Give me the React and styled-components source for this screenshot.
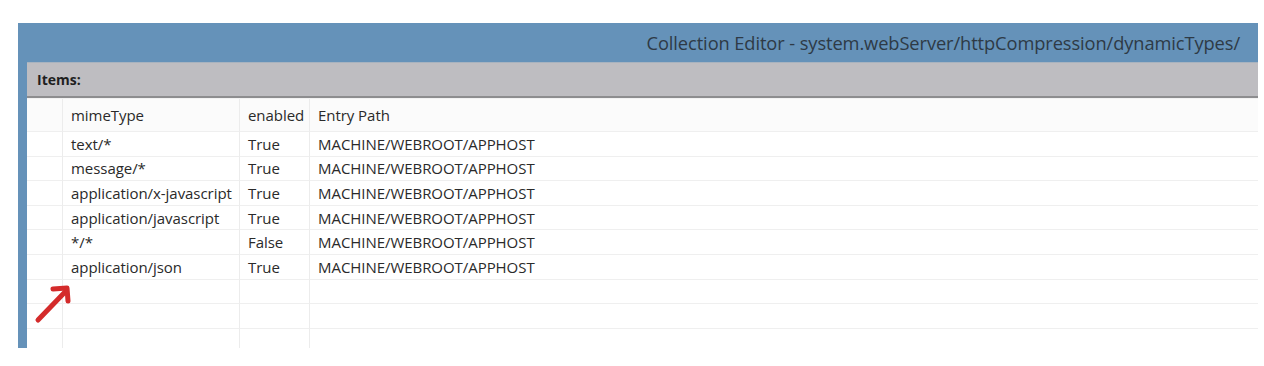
import React from 'react'
import styled, { createGlobalStyle } from 'styled-components'

const GlobalStyle = createGlobalStyle`
  html, body {
    margin: 0;
    padding: 0;
    background: #ffffff;
  }
`

const Page = styled.div`
  width: 1264px;
  height: 366px;
  padding: 23px 0 0 18px;
  box-sizing: border-box;
  font-family: 'Open Sans', 'Liberation Sans', sans-serif;
`

const Window = styled.div`
  position: relative;
  width: 1240px;
  height: 325px;
  background: #6592b9;
  display: flex;
  flex-direction: column;
  overflow: hidden;
`

const TitleBar = styled.div`
  flex-shrink: 0;
  height: 39px;
  display: flex;
  align-items: center;
  justify-content: flex-end;
  padding-right: 18px;
  font-size: 18.3px;
  color: #2e3a46;
  letter-spacing: -0.1px;
`

const Body = styled.div`
  flex: 1;
  margin-left: 9px;
  display: flex;
  flex-direction: column;
  background: #ffffff;
`

const ItemsBar = styled.div`
  flex-shrink: 0;
  height: 33px;
  background: #bebdc1;
  border-top: 1px solid #a8b3bf;
  border-bottom: 2px solid #8d8d8f;
  display: flex;
  align-items: center;
  padding-left: 10px;
  font-size: 14px;
  font-weight: bold;
  color: #1f1f1f;
`

const Grid = styled.div`
  flex: 1;
  display: grid;
  grid-template-columns: 36px 177px 70px 1fr;
  grid-auto-rows: 24.6px;
  grid-template-rows: 33px;
  border-top: 1px solid #f2f2f2;
`

const Cell = styled.div`
  display: flex;
  align-items: center;
  padding-left: ${p => (p.$pad ? 8 : 0)}px;
  font-size: 15px;
  letter-spacing: -0.05px;
  color: #2a2a2a;
  white-space: nowrap;
  border-bottom: 1.5px solid #efefef;
  border-right: ${p => (p.$last ? 'none' : '1px solid #ececec')};
  background: ${p => (p.$head ? '#fbfbfb' : '#ffffff')};
  box-sizing: border-box;
`

const Arrow = styled.svg`
  position: absolute;
  left: 14px;
  top: 259px;
`

const columns = ['mimeType', 'enabled', 'Entry Path']

const rows = [
  ['text/*', 'True'],
  ['message/*', 'True'],
  ['application/x-javascript', 'True'],
  ['application/javascript', 'True'],
  ['*/*', 'False'],
  ['application/json', 'True'],
  null,
  null,
  null,
]

function App() {
  return (
    <>
      <GlobalStyle />
      <Page>
        <Window>
          <TitleBar>
            Collection Editor - system.webServer/httpCompression/dynamicTypes/
          </TitleBar>
          <Body>
            <ItemsBar>Items:</ItemsBar>
            <Grid>
              <Cell $head />
              {columns.map((c, i) => (
                <Cell key={c} $head $pad $last={i === columns.length - 1}>
                  {c}
                </Cell>
              ))}
              {rows.map((r, i) => (
                <React.Fragment key={i}>
                  <Cell />
                  <Cell $pad>{r && r[0]}</Cell>
                  <Cell $pad>{r && r[1]}</Cell>
                  <Cell $pad $last>
                    {r && 'MACHINE/WEBROOT/APPHOST'}
                  </Cell>
                </React.Fragment>
              ))}
            </Grid>
          </Body>
          <Arrow width="44" height="44" viewBox="0 0 44 44">
            <path
              d="M6 38 L33 10"
              stroke="#d42b2b"
              strokeWidth="5"
              strokeLinecap="round"
              fill="none"
            />
            <path
              d="M21 7 L35 6 L36 19"
              stroke="#d42b2b"
              strokeWidth="5"
              strokeLinecap="round"
              strokeLinejoin="round"
              fill="none"
            />
          </Arrow>
        </Window>
      </Page>
    </>
  )
}

export default App
